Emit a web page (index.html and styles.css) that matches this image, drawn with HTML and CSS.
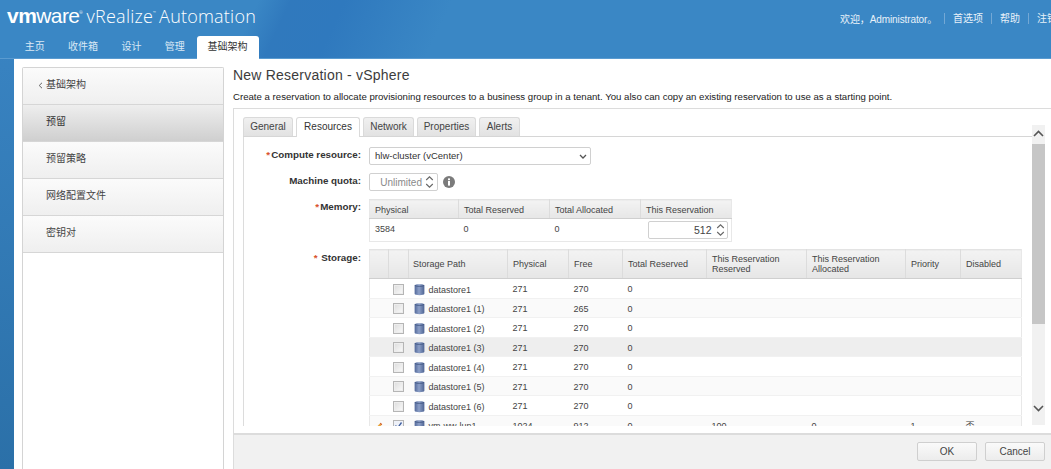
FILE: index.html
```html
<!DOCTYPE html>
<html lang="zh">
<head>
<meta charset="utf-8">
<title>New Reservation - vSphere</title>
<link rel="stylesheet" href="styles.css">
</head>
<body>
<div class="page">
  <header class="header">
    <div class="topbar">
      <div class="brand"><span class="vm"><b>vm</b>ware</span><sup class="tm">®</sup><span class="product">vRealize<sup class="tm2">™</sup> Automation</span></div>
      <div class="usernav">
        <span class="welcome">欢迎，Administrator。</span>
        <a class="ulink">首选项</a><a class="ulink">帮助</a><a class="ulink">注销</a>
      </div>
    </div>
    <nav class="mainnav">
      <a class="navitem">主页</a><a class="navitem">收件箱</a><a class="navitem">设计</a><a class="navitem">管理</a><a class="navitem active">基础架构</a>
    </nav>
  </header>
  <div class="content">
    <aside class="side">
      <div class="sideitem back"><svg class="backicon" viewBox="0 0 5 7" width="5" height="7"><path d="M4 .8 1.2 3.5 4 6.2" fill="none" stroke="#666" stroke-width="1"/></svg>基础架构</div>
      <div class="sideitem selected">预留</div>
      <div class="sideitem">预留策略</div>
      <div class="sideitem">网络配置文件</div>
      <div class="sideitem">密钥对</div>
    </aside>
    <main class="main">
      <h1 class="title">New Reservation - vSphere</h1>
      <p class="desc">Create a reservation to allocate provisioning resources to a business group in a tenant. You also can copy an existing reservation to use as a starting point.</p>
      <section class="panel">
        <div class="scrollarea">
          <div class="tabpane">
            <div class="tabs">
              <a class="tab t1">General</a><a class="tab t2 current">Resources</a><a class="tab t3">Network</a><a class="tab t4">Properties</a><a class="tab t5">Alerts</a>
            </div>
            <div class="form">
              <div class="row r-select">
                <label class="lab"><i>*</i>Compute resource:</label>
                <div class="select">hlw-cluster (vCenter)<svg class="chev" viewBox="0 0 8 5" width="8" height="5"><path d="M1 1l3 3 3-3" fill="none" stroke="#555" stroke-width="1.3"/></svg></div>
              </div>
              <div class="row r-quota">
                <label class="lab">Machine quota:</label>
                <div class="spin quota"><span>Unlimited</span>
                  <svg class="arrows" viewBox="0 0 9 14" width="9" height="14"><path d="M1.2 5 4.5 1.8 7.8 5M1.2 9 4.5 12.2 7.8 9" fill="none" stroke="#666" stroke-width="1.1"/></svg>
                </div>
                <svg class="info" viewBox="0 0 12 12" width="12" height="12"><circle cx="6" cy="6" r="6" fill="#7b7b7b"/><rect x="5" y="5" width="2" height="4.6" fill="#fff"/><rect x="5" y="2.4" width="2" height="1.8" fill="#fff"/></svg>
              </div>
              <div class="row r-memory">
                <label class="lab"><i>*</i>Memory:</label>
                <table class="grid memory">
                  <colgroup><col class="m1"><col class="m1b"><col class="m1b"><col class="m1b"></colgroup>
                  <thead><tr><th>Physical</th><th>Total Reserved</th><th>Total Allocated</th><th>This Reservation</th></tr></thead>
                  <tbody><tr><td>3584</td><td>0</td><td>0</td><td class="spincell"><div class="spin mem"><span>512</span>
                    <svg class="arrows" viewBox="0 0 9 14" width="9" height="14"><path d="M1.2 5 4.5 1.8 7.8 5M1.2 9 4.5 12.2 7.8 9" fill="none" stroke="#666" stroke-width="1.1"/></svg></div></td></tr></tbody>
                </table>
              </div>
              <div class="row r-storage">
                <label class="lab"><i>*</i> Storage:</label>
                <table class="grid storage">
                  <colgroup><col class="s1"><col class="s2"><col class="s3"><col class="s4"><col class="s5"><col class="s6"><col class="s7"><col class="s8"><col class="s9"><col class="s10"></colgroup>
                  <thead><tr><th></th><th></th><th>Storage Path</th><th>Physical</th><th>Free</th><th>Total Reserved</th><th>This Reservation Reserved</th><th>This Reservation Allocated</th><th>Priority</th><th>Disabled</th></tr></thead>
                  <tbody>
                    <tr><td></td><td class="c"><span class="check"></span></td><td><svg class="db" viewBox="0 0 10 12" width="11" height="13"><use href="#cyl"/></svg>datastore1</td><td>271</td><td>270</td><td>0</td><td></td><td></td><td></td><td></td></tr>
                    <tr class="alt"><td></td><td class="c"><span class="check"></span></td><td><svg class="db" viewBox="0 0 10 12" width="11" height="13"><use href="#cyl"/></svg>datastore1 (1)</td><td>271</td><td>265</td><td>0</td><td></td><td></td><td></td><td></td></tr>
                    <tr><td></td><td class="c"><span class="check"></span></td><td><svg class="db" viewBox="0 0 10 12" width="11" height="13"><use href="#cyl"/></svg>datastore1 (2)</td><td>271</td><td>270</td><td>0</td><td></td><td></td><td></td><td></td></tr>
                    <tr class="hover"><td></td><td class="c"><span class="check"></span></td><td><svg class="db" viewBox="0 0 10 12" width="11" height="13"><use href="#cyl"/></svg>datastore1 (3)</td><td>271</td><td>270</td><td>0</td><td></td><td></td><td></td><td></td></tr>
                    <tr><td></td><td class="c"><span class="check"></span></td><td><svg class="db" viewBox="0 0 10 12" width="11" height="13"><use href="#cyl"/></svg>datastore1 (4)</td><td>271</td><td>270</td><td>0</td><td></td><td></td><td></td><td></td></tr>
                    <tr class="alt"><td></td><td class="c"><span class="check"></span></td><td><svg class="db" viewBox="0 0 10 12" width="11" height="13"><use href="#cyl"/></svg>datastore1 (5)</td><td>271</td><td>270</td><td>0</td><td></td><td></td><td></td><td></td></tr>
                    <tr><td></td><td class="c"><span class="check"></span></td><td><svg class="db" viewBox="0 0 10 12" width="11" height="13"><use href="#cyl"/></svg>datastore1 (6)</td><td>271</td><td>270</td><td>0</td><td></td><td></td><td></td><td></td></tr>
                    <tr class="alt"><td class="c"><svg class="pencil" viewBox="0 0 8 8" width="8" height="8"><path d="M.8 7.2 1.6 5 5.600 .8 7.200 2.400 3 6.400Z" fill="#e8a33a"/><path d="M5 1.400 5.600 .8 7.200 2.400 6.600 3Z" fill="#c9503c"/><path d="M.8 7.200 1.200 6l.9.9Z" fill="#444"/></svg></td><td class="c"><span class="check on"><svg viewBox="0 0 9 9" width="9" height="9"><path d="M1.500 4.500 3.600 7 7.500 1.500" fill="none" stroke="#3b5c9e" stroke-width="1.300"/></svg></span></td><td><svg class="db" viewBox="0 0 10 12" width="11" height="13"><use href="#cyl"/></svg>vm-ww-lun1</td><td>1024</td><td>912</td><td>0</td><td>100</td><td>0</td><td>1</td><td>否</td></tr>
                  </tbody>
                </table>
              </div>
            </div>
          </div>
          <div class="scrollbar">
            <svg class="sb-up" viewBox="0 0 11 7" width="11" height="7"><path d="M1 6 5.500 1.500 10 6" fill="none" stroke="#555" stroke-width="1.6"/></svg>
            <div class="thumb"></div>
            <svg class="sb-down" viewBox="0 0 11 7" width="11" height="7"><path d="M1 1 5.500 5.500 10 1" fill="none" stroke="#555" stroke-width="1.6"/></svg>
          </div>
        </div>
        <footer class="footer">
          <button class="btn">OK</button><button class="btn">Cancel</button>
        </footer>
      </section>
    </main>
  </div>
</div>
<svg class="defs" width="0" height="0"><defs>
  <linearGradient id="cylg" x1="0" x2="1" y1="0" y2="0"><stop offset="0" stop-color="#53699a"/><stop offset=".45" stop-color="#8da0c8"/><stop offset="1" stop-color="#4e6493"/></linearGradient>
  <g id="cyl"><path d="M.5 2.200C.5.800 9.500.800 9.500 2.200V10C9.500 11.800.5 11.800.5 10Z" fill="url(#cylg)"/><path d="M.8 2.300C2 3.500 8 3.500 9.200 2.300" fill="none" stroke="#3f5480" stroke-width=".7"/></g>
</defs></svg>
</body>
</html>
```
FILE: styles.css
```css
* { box-sizing: border-box; }
html, body { margin: 0; padding: 0; height: 100%; }
body { font-family: "Liberation Sans", "Noto Sans CJK SC", sans-serif; font-size: 10px; color: #333; overflow: hidden; }
.defs { position: absolute; }
.page { width: 1051px; height: 469px; display: flex; flex-direction: column; overflow: hidden; background: linear-gradient(180deg, #3a85c4 0, #2b70a8 100%); }

.header { height: 59px; background: linear-gradient(115deg, #3a87c5 0, #3a87c5 24%, #3079bd 27%, #2f79be 32%, #3a87c5 42%, #3a87c5 100%); border-bottom: 1px solid #5a9bd0; flex: none; }
.topbar { height: 36px; display: flex; justify-content: space-between; align-items: flex-start; }
.brand { color: #fff; display: flex; align-items: baseline; padding: 4px 0 0 7px; white-space: nowrap; font-family: "Open Sans", sans-serif; }
.vm { font-family: "Liberation Sans", sans-serif; font-size: 21px; letter-spacing: -.65px; line-height: 24px; }
.vm b { font-weight: 700; letter-spacing: -.5px; }
.tm { font-size: 4px; align-self: flex-start; margin: 6px 4px 0 0; line-height: 6px; }
.product { font-size: 18px; font-weight: 300; letter-spacing: .22px; line-height: 24px; font-family: "Open Sans", sans-serif; }
.tm2 { font-size: 4px; vertical-align: 9px; line-height: 0; margin-right: -2px; }
.usernav { display: flex; align-items: center; color: #e8f1f9; padding-top: 0; height: 36px; white-space: nowrap; width: 211px; overflow: hidden; }
.welcome { flex: none; width: 104px; font-size: 10px; letter-spacing: -.1px; }
.ulink { flex: none; padding: 0 8px; border-left: 1px solid #73a8d5; line-height: 11px; font-size: 10px; }

.mainnav { height: 23px; display: flex; padding-left: 13px; align-items: stretch; }
.navitem { color: #dbe9f5; font-size: 10px; line-height: 22px; padding: 0 11.700px; white-space: nowrap; }
.navitem.active { background: #fff; color: #333; padding: 0 11px; border-radius: 3px 3px 0 0; height: 23px; }

.content { flex: 1; min-height: 0; margin-left: 14px; background: #fff; padding: 8px 0 0 8px; display: flex; gap: 9px; }
.side { width: 202px; flex: none; border: 1px solid #d4d4d4; border-bottom: 0; border-radius: 2px 2px 0 0; background: #fff; }
.sideitem { height: 37px; line-height: 33px; padding-left: 23px; background: linear-gradient(180deg, #fbfbfb, #efefef); border-bottom: 1px solid #d6d6d6; color: #444; font-size: 10px; }
.sideitem.back { position: relative; padding-left: 23px; }
.backicon { position: absolute; left: 15px; top: 14px; }
.sideitem.selected { background: linear-gradient(180deg, #eeeeee, #cfcfcf); color: #333; }

.main { flex: 1; min-width: 0; display: flex; flex-direction: column; }
.title { margin: -1px 0 0; font-size: 14px; font-weight: 400; line-height: 18px; color: #3c3c3c; letter-spacing: .22px; }
.desc { margin: 7px 0 0; font-size: 9.650px; line-height: 12px; color: #222; white-space: nowrap; }
.panel { margin-top: 5px; flex: 1; min-height: 0; display: flex; flex-direction: column; border-top: 1px solid #dcdcdc; border-left: 1px solid #dcdcdc; }

.scrollarea { flex: 1; min-height: 0; display: flex; overflow: hidden; padding-left: 9px; }
.tabpane { width: 789px; flex: none; padding-top: 8px; margin-bottom: 7px; overflow: hidden; }
.tabs { height: 20px; display: flex; border-bottom: 1px solid #d6d6d6; gap: 3px; }
.tab { height: 19px; line-height: 18px; background: linear-gradient(180deg, #f0f0f0, #e2e2e2); border: 1px solid #dadada; border-bottom: 0; border-radius: 3px 3px 0 0; text-align: center; color: #444; font-size: 10px; }
.tab.current { height: 20px; background: #fff; color: #333; }
.t1 { width: 50px; } .t2 { width: 64px; } .t3 { width: 51px; } .t4 { width: 59px; } .t5 { width: 41px; }

.form { border-left: 1px solid #dcdcdc; height: 320px; padding-top: 10px; }
.row { display: flex; align-items: flex-start; }
.lab { width: 117px; flex: none; text-align: right; font-weight: 700; font-size: 9.800px; color: #333; padding-top: 2px; line-height: 12px; white-space: nowrap; margin-right: 8px; }
.lab i { color: #d9532c; font-style: normal; margin-right: 1px; }
.r-select { height: 26px; }
.select { width: 222px; height: 18px; border: 1px solid #d0d0d0; border-radius: 2px; line-height: 16px; padding-left: 5px; position: relative; color: #333; font-size: 9.500px; }
.chev { position: absolute; right: 3px; top: 6px; }
.r-quota { height: 26px; }
.spin { border: 1px solid #d0d0d0; border-radius: 2px; display: flex; align-items: center; justify-content: flex-end; background: #fff; }
.quota { width: 69px; height: 18px; color: #8a8a8a; padding-right: 3px; font-size: 10px; gap: 3px; }
.info { margin: 3px 0 0 5px; }
.r-memory { height: 50px; }

.grid { border-collapse: collapse; table-layout: fixed; border: 1px solid #e8e8e8; border-top-color: #e3e3e3; }
.grid th { background: linear-gradient(180deg, #f3f3f3, #e6e6e6); border-right: 1px solid #dcdcdc; border-bottom: 1px solid #cfcfcf; font-weight: 400; text-align: left; color: #444; font-size: 9px; padding: 1px 5px 0; line-height: 10px; }
.memory { width: 362px; }
.m1 { width: 89px; } .m1b { width: 91px; }
.memory th { height: 19px; }
.memory th:last-child { border-right: 0; }
.memory td { height: 23px; padding: 0 5px 2px; font-size: 9px; color: #444; background: #fff; }
.memory .spincell { padding: 2px 3px 2px 7px; }
.mem { width: 80px; height: 18px; font-size: 10.500px; color: #444; padding-right: 2px; gap: 4px; }

.r-storage { height: 190px; }
.r-storage .lab { padding-top: 3px; }
.storage { width: 652px; }
.s1 { width: 19px; } .s2 { width: 20px; } .s3 { width: 99px; } .s4 { width: 61px; } .s5 { width: 54px; } .s6 { width: 84px; } .s7 { width: 100px; } .s8 { width: 99px; } .s9 { width: 55px; } .s10 { width: 61px; }
.storage th { height: 29px; padding-top: 0; }
.storage th:nth-child(3) { padding-left: 4px; }
.storage th:last-child { border-right: 0; }
.storage td { height: 19.500px; padding: 2px 5px 0; font-size: 9px; color: #444; background: #fff; border-bottom: 1px solid #f1f1f1; white-space: nowrap; line-height: 10px; }
.storage tr.alt td { background: #fafafa; }
.storage tr.hover td { background: #eeeeee; }
.storage td.c { padding: 2px 0 0; text-align: center; }
.check { display: inline-block; width: 11px; height: 11px; border: 1px solid #b5b5b5; background: linear-gradient(135deg, #dcdcdc, #fbfbfb); vertical-align: middle; box-shadow: inset 0 0 0 1px #ededed; }
.check.on { background: #eef1f8; box-shadow: none; line-height: 0; }
.db { vertical-align: -3px; margin-right: 4px; }
.pencil { vertical-align: middle; }

.scrollbar { width: 13px; flex: none; margin: 16px 0 8px 0; position: relative; background: #f1f1f1; }
.thumb { position: absolute; left: 0; top: 19px; width: 13px; height: 180px; background: #c6c6c6; }
.sb-up { position: absolute; left: 1px; top: 5px; }
.sb-down { position: absolute; left: 1px; bottom: 13px; }

.footer { height: 36px; flex: none; background: #f1f1f1; border-top: 2px solid #dcdcdc; display: flex; justify-content: flex-end; align-items: center; gap: 8px; padding: 0 6px 2px 0; }
.btn { width: 60px; height: 19px; padding: 0; border: 1px solid #cfcfcf; border-radius: 2px; background: linear-gradient(180deg, #fafafa, #ececec); font-family: "Liberation Sans", sans-serif; font-size: 10px; color: #444; }
```
